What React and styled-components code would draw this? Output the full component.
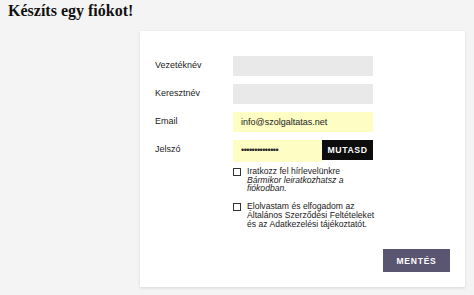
import React from 'react';
import styled, { createGlobalStyle } from 'styled-components';

const GlobalStyle = createGlobalStyle`
  body {
    margin: 0;
    background: #f4f4f4;
    font-family: "Liberation Sans", Arial, sans-serif;
  }
`;

const Page = styled.div`
  width: 474px;
  height: 295px;
  padding: 0 8px;
  box-sizing: border-box;
  display: flex;
  flex-direction: column;
`;

const Title = styled.h1`
  margin: 1px 0 0;
  font-family: "Liberation Serif", "Times New Roman", serif;
  font-size: 16px;
  font-weight: bold;
  color: #111;
  line-height: 20px;
`;

const Card = styled.div`
  margin: 10px 0 0 132px;
  width: 325px;
  height: 256px;
  box-sizing: border-box;
  background: #fff;
  box-shadow: 0 1px 3px rgba(0, 0, 0, 0.12);
  padding: 25px 15px 15px 15px;
  display: flex;
  flex-direction: column;
`;

const Form = styled.div`
  display: grid;
  grid-template-columns: 78px 140px;
  row-gap: 8px;
  align-items: center;
`;

const Label = styled.label`
  font-size: 9px;
  color: #222;
  margin-top: -2px;
`;

const Field = styled.div`
  height: 20px;
  background: ${p => (p.$filled ? '#fdfdc4' : '#e9e9e9')};
  display: flex;
  align-items: center;
  padding-left: 8px;
  font-size: 9px;
  color: #222;
`;

const PasswordRow = styled.div`
  display: flex;
  height: 20px;
`;

const Dots = styled(Field)`
  flex: 1;
  font-size: 9px;
  letter-spacing: -0.5px;
  padding-bottom: 2px;
`;

const ShowButton = styled.div`
  width: 51px;
  background: #0d0d0d;
  color: #fff;
  font-weight: bold;
  font-size: 8.7px;
  letter-spacing: 0.6px;
  display: flex;
  align-items: center;
  justify-content: center;
`;

const Checks = styled.div`
  margin: 7px 0 0 78px;
  display: flex;
  flex-direction: column;
  gap: 9px;
`;

const CheckRow = styled.div`
  display: flex;
  gap: 6px;
  width: 142px;
`;

const Box = styled.span`
  flex: none;
  width: 6px;
  height: 6px;
  margin-top: 1px;
  border: 1px solid #333;
  background: #fff;
`;

const CheckText = styled.div`
  font-size: 8.6px;
  line-height: 8.7px;
  color: #222;
  em {
    display: block;
  }
`;

const Footer = styled.div`
  margin-top: auto;
  display: flex;
  justify-content: flex-end;
`;

const SaveButton = styled.div`
  width: 67px;
  height: 23px;
  background: #5a5570;
  color: #fff;
  font-weight: bold;
  font-size: 8.5px;
  letter-spacing: 0.8px;
  display: flex;
  align-items: center;
  justify-content: center;
`;

function App() {
  return (
    <>
      <GlobalStyle />
      <Page>
        <Title>Készíts egy fiókot!</Title>
        <Card>
          <Form>
            <Label>Vezetéknév</Label>
            <Field />
            <Label>Keresztnév</Label>
            <Field />
            <Label>Email</Label>
            <Field $filled>info@szolgaltatas.net</Field>
            <Label>Jelszó</Label>
            <PasswordRow>
              <Dots $filled>••••••••••••••</Dots>
              <ShowButton>MUTASD</ShowButton>
            </PasswordRow>
          </Form>
          <Checks>
            <CheckRow>
              <Box />
              <CheckText>
                Iratkozz fel hírlevelünkre
                <em>Bármikor leiratkozhatsz a fiókodban.</em>
              </CheckText>
            </CheckRow>
            <CheckRow>
              <Box />
              <CheckText>
                Elolvastam és elfogadom az Általános Szerződési Feltételeket és az Adatkezelési tájékoztatót.
              </CheckText>
            </CheckRow>
          </Checks>
          <Footer>
            <SaveButton>MENTÉS</SaveButton>
          </Footer>
        </Card>
      </Page>
    </>
  );
}

export default App;
